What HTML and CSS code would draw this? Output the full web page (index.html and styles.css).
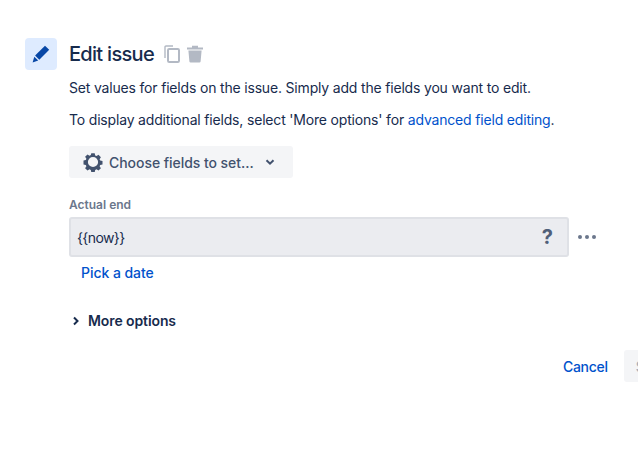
FILE: index.html
```html
<!DOCTYPE html>
<html lang="en">
<head>
    <meta charset="UTF-8">
    <meta name="viewport" content="width=device-width, initial-scale=1.0">
    <title>Edit issue</title>
    <link rel="stylesheet" href="styles.css">
</head>
<body>

    <div class="rule">
        <div class="rule-icon">
            <svg width="20" height="20" viewBox="0 0 20 20"><path d="M14 1.800 18.200 5.800 8.300 15.700 4.100 11.600Z" fill="#0747a6"/><path d="M3.300 12.800 7.200 16.600 1.600 18.400Z" fill="#0747a6"/></svg>
        </div>

        <div class="rule-body">
            <div class="rule-header">
                <h1>Edit issue</h1>
                <svg class="header-icon" width="16" height="18" viewBox="0 0 16 18"><path d="M1 13V2A1 1 0 0 1 2 1H9" fill="none" stroke="#b3b9c4" stroke-width="1.400"/><rect x="4" y="4" width="11" height="13" rx="1.200" fill="none" stroke="#b3b9c4" stroke-width="2"/></svg>
                <svg class="header-icon" width="16" height="18" viewBox="0 0 16 18"><path d="M0 2.400H16V4.400H0ZM5 .8H11V2.400H5Z" fill="#b3b9c4"/><path d="M1.400 5.400H14.600L13.600 16.400A1.200 1.200 0 0 1 12.400 17.400H3.600A1.200 1.200 0 0 1 2.400 16.400Z" fill="#b3b9c4"/></svg>
            </div>

            <p class="intro">Set values for fields on the issue. Simply add the fields you want to edit.</p>
            <p class="intro">To display additional fields, select 'More options' for <a href="#">advanced field editing</a>.</p>

            <button class="choose-button" type="button">
                <svg width="20" height="20" viewBox="0 0 20 20"><path fill-rule="evenodd" d="M8.300 1.200h3.400l.5 2.300 1.300.6 2-1.300 2.400 2.400-1.300 2 .6 1.300 2.300.5v3.400l-2.300.5-.6 1.300 1.300 2-2.400 2.400-2-1.300-1.300.6-.5 2.300H8.300l-.5-2.300-1.300-.6-2 1.300-2.400-2.400 1.300-2-.6-1.300-2.300-.5V8.600l2.300-.5.6-1.300-1.300-2 2.400-2.400 2 1.300 1.300-.6ZM10 4.900a5.100 5.100 0 1 0 0 10.200 5.100 5.100 0 0 0 0-10.200Z" fill="#42526e"/></svg>
                <span>Choose fields to set...</span>
                <svg class="chevron" width="10" height="10" viewBox="0 0 10 10"><path d="M1.500 3.200 5 6.700 8.500 3.200" fill="none" stroke="#42526e" stroke-width="2"/></svg>
            </button>

            <label class="field-label" for="actualEnd">Actual end</label>
            <div class="field-row">
                <div class="field-input">
                    <input type="text" id="actualEnd" value="{{now}}">
                    <span class="help">?</span>
                </div>
                <div class="dots"><i></i><i></i><i></i></div>
            </div>
            <a class="pick-date" href="#">Pick a date</a>

            <div class="more-options">
                <svg width="8" height="10" viewBox="0 0 8 10"><path d="M2 1.500 5.500 5 2 8.500" fill="none" stroke="#172b4d" stroke-width="2"/></svg>
                <span>More options</span>
            </div>

            <div class="actions">
                <a class="cancel" href="#">Cancel</a>
                <button class="save-button" type="button">Save</button>
            </div>
        </div>
    </div>

</body>
</html>
```

FILE: styles.css
```css
html, body {
    height: 100%;
    overflow: hidden;
}
body {
    font-family: 'Inter', sans-serif;
    font-size: 14px;
    color: #172b4d;
    background-color: white;
    margin: 0;
    padding: 0;
}
a {
    color: #0052cc;
    text-decoration: none;
}
.rule {
    display: flex;
    gap: 12px;
    padding: 38px 0 0 25px;
    width: 680px;
}
.rule-icon {
    flex: none;
    display: flex;
    align-items: center;
    justify-content: center;
    width: 32px;
    height: 32px;
    background-color: #deebff;
    border-radius: 4px;
}
.rule-body {
    flex: 1;
}
.rule-header {
    display: flex;
    align-items: center;
    height: 32px;
}
.rule-header h1 {
    margin: 0 10px 0 0;
    font-size: 20px;
    font-weight: 500;
    line-height: 32px;
    letter-spacing: -0.7px;
}
.header-icon {
    margin-right: 7px;
}
.intro {
    margin: 8px 0 12px;
    line-height: 20px;
    font-size: 14px;
    letter-spacing: -0.18px;
    color: #172b4d;
}
.choose-button {
    display: flex;
    align-items: center;
    height: 32px;
    margin-top: 16px;
    padding: 0 14px;
    width: 224px;
    border: none;
    border-radius: 3px;
    background-color: #f4f5f7;
    color: #42526e;
    font-family: inherit;
    font-size: 14px;
    font-weight: 500;
    letter-spacing: -0.05px;
}
.choose-button span {
    margin-left: 6px;
}
.choose-button .chevron {
    margin-left: 11px;
}
.field-label {
    display: block;
    margin-top: 19px;
    font-size: 12px;
    line-height: 16px;
    font-weight: 600;
    color: #6b778c;
}
.field-row {
    display: flex;
    align-items: center;
    margin-top: 4px;
}
.field-input {
    display: flex;
    align-items: center;
    width: 500px;
    height: 40px;
    box-sizing: border-box;
    padding: 0 14px 0 6px;
    background-color: #ebecf0;
    border: 2px solid #dfe1e6;
    border-radius: 3px;
}
.field-input input {
    flex: 1;
    min-width: 0;
    border: none;
    outline: none;
    padding: 0;
    background: transparent;
    font-family: inherit;
    font-size: 14px;
    letter-spacing: -0.6px;
    color: #172b4d;
}
.help {
    font-size: 20px;
    font-weight: 700;
    color: #505f79;
}
.dots {
    display: flex;
    gap: 3px;
    margin-left: 9px;
}
.dots i {
    width: 4px;
    height: 4px;
    border-radius: 50%;
    background-color: #6b778c;
}
.pick-date {
    display: block;
    margin: 6px 0 0 12px;
    line-height: 20px;
    font-weight: 500;
    letter-spacing: -0.05px;
}
.more-options {
    display: flex;
    align-items: center;
    gap: 8px;
    margin: 28px 0 0 3px;
    line-height: 20px;
    font-weight: 600;
    letter-spacing: -0.1px;
}
.actions {
    display: flex;
    align-items: center;
    margin: 19px 0 0 494px;
}
.cancel {
    font-weight: 500;
    letter-spacing: -0.3px;
}
.save-button {
    height: 32px;
    margin-left: 16px;
    padding: 0 12px;
    border: none;
    border-radius: 3px;
    background-color: #f4f5f7;
    color: #a5adba;
    font-family: inherit;
    font-size: 14px;
    font-weight: 500;
}
```
